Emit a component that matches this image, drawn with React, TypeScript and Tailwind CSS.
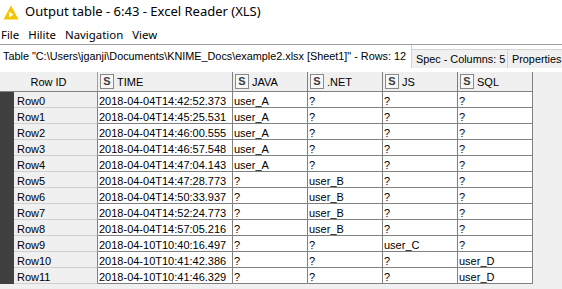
import React from "react";

const rows: [string, string, string, string, string, string][] = [
  ["Row0", "2018-04-04T14:42:52.373", "user_A", "?", "?", "?"],
  ["Row1", "2018-04-04T14:45:25.531", "user_A", "?", "?", "?"],
  ["Row2", "2018-04-04T14:46:00.555", "user_A", "?", "?", "?"],
  ["Row3", "2018-04-04T14:46:57.548", "user_A", "?", "?", "?"],
  ["Row4", "2018-04-04T14:47:04.143", "user_A", "?", "?", "?"],
  ["Row5", "2018-04-04T14:47:28.773", "?", "user_B", "?", "?"],
  ["Row6", "2018-04-04T14:50:33.937", "?", "user_B", "?", "?"],
  ["Row7", "2018-04-04T14:52:24.773", "?", "user_B", "?", "?"],
  ["Row8", "2018-04-04T14:57:05.216", "?", "user_B", "?", "?"],
  ["Row9", "2018-04-10T10:40:16.497", "?", "?", "user_C", "?"],
  ["Row10", "2018-04-10T10:41:42.386", "?", "?", "?", "user_D"],
  ["Row11", "2018-04-10T10:41:46.329", "?", "?", "?", "user_D"],
];

const cols: { name: string; w: string }[] = [
  { name: "TIME", w: "w-[135px]" },
  { name: "JAVA", w: "w-[75px]" },
  { name: ".NET", w: "w-[75px]" },
  { name: "JS", w: "w-[75px]" },
  { name: "SQL", w: "w-[75px]" },
];

function SIcon() {
  return (
    <div className="w-[14px] h-[15px] border border-[#8a8a8a] bg-[#f7f7f7] flex items-center justify-center text-[11px] font-bold text-[#3c3c3c] leading-none shrink-0">
      S
    </div>
  );
}

export default function App() {
  return (
    <div
      className="w-[562px] h-[289px] overflow-hidden bg-[#f0f0f0] text-black"
      style={{ fontFamily: '"Liberation Sans", Arial, sans-serif' }}
    >
      {/* Title bar */}
      <div className="h-[24px] bg-white flex items-center">
        <svg width="16" height="15" viewBox="0 0 16 15" className="ml-[3px] mr-[6px]">
          <path d="M8 0.5 L15.5 14.5 L0.5 14.5 Z" fill="#f5c400" />
          <path d="M6 6.5 L10.5 9.5 L6 12.5 Z" fill="#ffffff" />
        </svg>
        <span className="text-[13px]" style={{ fontFamily: '"Noto Sans", sans-serif' }}>
          Output table - 6:43 - Excel Reader (XLS)
        </span>
      </div>
      {/* Menu bar */}
      <div
        className="h-[21px] bg-white flex items-center text-[11.4px] border-b border-[#a0a0a0] pt-[2px]"
        style={{ fontFamily: '"Noto Sans", sans-serif' }}
      >
        <span className="ml-[1px]">File</span>
        <span className="ml-[9px]">Hilite</span>
        <span className="ml-[9px]">Navigation</span>
        <span className="ml-[9px]">View</span>
      </div>
      {/* Tabs */}
      <div className="h-[23px] bg-white flex items-end text-[10.85px]">
        <div className="h-[23px] bg-white flex items-center pl-[3px] w-[412px] border-r border-[#d4d4d4] whitespace-nowrap">
          Table "C:\Users\jganji\Documents\KNIME_Docs\example2.xlsx [Sheet1]" - Rows: 12
        </div>
        <div className="h-[19px] bg-[#f0f0f0] border-t border-r border-[#d4d4d4] flex items-center px-[4px] w-[96px] whitespace-nowrap">
          Spec - Columns: 5
        </div>
        <div className="h-[19px] bg-[#f0f0f0] border-t border-[#d4d4d4] flex items-center px-[4px] flex-1 whitespace-nowrap overflow-hidden">
          Properties
        </div>
      </div>
      {/* Content */}
      <div className="bg-white h-[4px]" />
      <div className="flex text-[11px]">
        <div className="flex flex-col">
          {/* Header row */}
          <div className="flex h-[20px]">
            <div className="w-[98px] h-[20px] bg-[#f0f0f0] border-r border-[#a0a0a0] border-b border-b-[#808080] flex items-center justify-center pt-[2px]">
              Row ID
            </div>
            {cols.map((c) => (
              <div
                key={c.name}
                className={`${c.w} h-[20px] bg-[#f0f0f0] border-r border-[#808080] border-b flex items-center pl-[2px] gap-[3px]`}
              >
                <SIcon />
                <span className="pt-[1px]">{c.name}</span>
              </div>
            ))}
          </div>
          {rows.map((r) => (
            <div key={r[0]} className="flex h-[16px]">
              <div className="w-[14px] h-[16px] bg-[#404040]" />
              <div className="w-[84px] h-[16px] bg-[#f0f0f0] border-b border-[#d0d0d0] border-r border-r-[#808080] pl-[3px] pt-[4px] leading-[11px]">
                {r[0]}
              </div>
              {cols.map((c, i) => (
                <div
                  key={c.name}
                  className={`${c.w} h-[16px] bg-white border-r border-b border-[#808080] pl-[1px] pt-[4px] leading-[11px] whitespace-nowrap overflow-hidden`}
                >
                  {r[i + 1]}
                </div>
              ))}
            </div>
          ))}
        </div>
        <div className="flex-1" />
      </div>
    </div>
  );
}
